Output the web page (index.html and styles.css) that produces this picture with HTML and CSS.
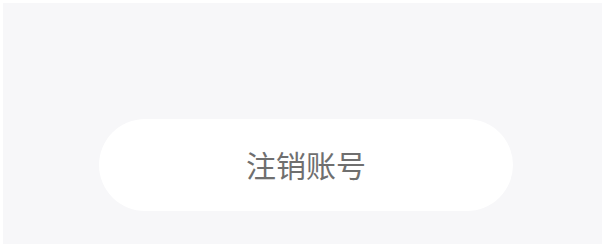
FILE: index.html
```html
<!DOCTYPE html>
<html>
<head>
  <meta charset="utf-8">
  <title>注销账号</title>
  <link rel="stylesheet" href="styles.css">
</head>
<body>
  <!-- settings page bottom: account removal -->
  <div class="page">
    <div class="actions">
      <button class="logout-btn">注销账号</button>
    </div>
  </div>
</body>
</html>
```

FILE: styles.css
```css
body {
  margin: 0;
  background-color: #ffffff;
  font-family: "Noto Sans CJK SC", "Noto Sans", sans-serif;
}
/* Grey page area inside a thin white frame */
.page {
  margin: 3px 3px 4px 3px;
  height: 241px;
  background-color: #f7f7f9;
  display: flex;
  flex-direction: column;
}
.actions {
  padding: 116px 89px 0 96px;
}
.logout-btn {
  display: block;
  width: 100%;
  height: 92px;
  border: none;
  border-radius: 46px;
  background-color: #ffffff;
  color: #6f6f6f;
  font-family: "Noto Sans CJK SC", "Noto Sans", sans-serif;
  font-size: 30px;
  letter-spacing: 0px;
  padding: 0 0 2px 0;
  cursor: pointer;
}
```
